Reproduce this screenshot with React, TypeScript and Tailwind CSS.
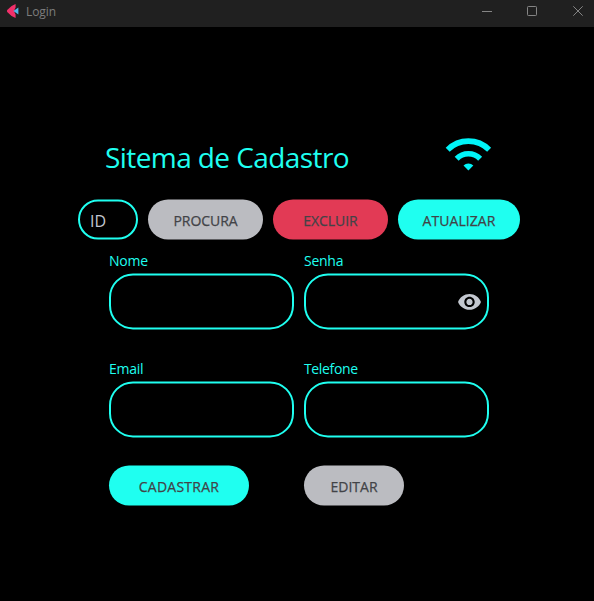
import React from "react";
import { MdVisibility } from "react-icons/md";

function TitleBar() {
  return (
    <header className="flex h-[27px] shrink-0 items-start bg-[#202020] pl-[7px] text-[#7d7d7d]">
      <svg className="mt-1 h-[14px] w-3 shrink-0" viewBox="0 0 12 14">
        <path d="M8.6 0 V3.4 Q6.2 7 8.6 10.6 V14 Q4.5 12.8 0.2 8 Q-0.2 7 0.2 6 Q4.5 1.2 8.6 0Z" fill="#f1306a" />
        <path d="M6.4 7 L11.4 3.4 V10.6Z" fill="#52b6e8" />
      </svg>
      <span className="ml-[7px] mt-1 text-[12px] leading-4 tracking-[-0.1px]">Login</span>
      <svg className="ml-auto mt-1 h-4 w-[120px] shrink-0" viewBox="0 0 120 16" fill="none" stroke="#858585">
        <path d="M8 7.5h10" />
        <rect x="53.5" y="2.5" width="9" height="9" rx="0.8" />
        <path d="M99.3 2.3l9.4 9.4M108.7 2.3l-9.4 9.4" />
      </svg>
    </header>
  );
}

function WifiIcon() {
  return (
    <svg className="h-9 w-12 shrink-0" viewBox="0 0 48 36" fill="none" stroke="#00f4f8" strokeWidth="5.6">
      <g transform="translate(0.4 0)">
        <path d="M3.28 13.68a29.3 29.3 0 0 1 41.44 0" />
        <path d="M12.26 22.66a16.6 16.6 0 0 1 23.48 0" />
        <path d="M24 34.4l-4.9-4.9a6.93 6.93 0 0 1 9.8 0z" fill="#00f4f8" stroke="none" />
      </g>
    </svg>
  );
}

function Pill({ className, textClassName, children }: { className: string; textClassName: string; children: React.ReactNode }) {
  return (
    <button className={`flex h-10 -translate-y-[0.5px] items-center justify-center rounded-full pt-px text-[14px] leading-5 font-medium text-[#424347] ${className}`}>
      <span className={`[-webkit-text-stroke:0.25px_#424347] ${textClassName}`}>{children}</span>
    </button>
  );
}

function Field({ label, labelClassName, children }: { label: string; labelClassName: string; children?: React.ReactNode }) {
  return (
    <label className="flex w-[185px] flex-col">
      <span className={`h-5 text-[14px] leading-5 ${labelClassName}`}>{label}</span>
      <span className="mt-[3px] flex h-14 -translate-y-[0.6px] items-center justify-end rounded-[24px] border-2 border-[#1ffff0] pr-[5px]">
        {children}
      </span>
    </label>
  );
}

export default function App() {
  return (
    <div className="flex h-[601px] w-[594px] flex-col overflow-hidden bg-black font-['Open_Sans','Noto_Sans',sans-serif] text-[#1ffff0]">
      <TitleBar />
      <main className="flex flex-col pt-[109px]">
        <div className="flex h-16 items-start pl-[105px]">
          <h1 className="mt-px w-[339px] text-[28px] leading-10 whitespace-nowrap tracking-[-0.58px]">Sitema de Cadastro</h1>
          <WifiIcon />
        </div>
        <div className="flex gap-[10px] pl-[78px]">
          <div className="flex h-10 w-[60px] -translate-y-[0.5px] items-center rounded-full border-2 border-[#1ffff0] pl-[10px] pt-px text-[16px] text-[#c3c7cf]">ID</div>
          <Pill className="w-[115px] bg-[#bbbcc1]" textClassName="tracking-[-0.05px]">PROCURA</Pill>
          <Pill className="w-[115px] bg-[#e23a55]" textClassName="tracking-[-0.05px]">EXCLUIR</Pill>
          <Pill className="w-[122px] bg-[#1ffff0]" textClassName="tracking-[0.05px]">ATUALIZAR</Pill>
        </div>
        <div className="mt-[11px] flex gap-[10px] pl-[109px]">
          <Field label="Nome" labelClassName="tracking-[-0.2px]" />
          <Field label="Senha" labelClassName="tracking-[-0.25px]">
            <MdVisibility className="size-[25px] text-[#c3c7cf]" />
          </Field>
        </div>
        <div className="mt-[29px] flex gap-[10px] pl-[109px]">
          <Field label="Email" labelClassName="tracking-[-0.25px]" />
          <Field label="Telefone" labelClassName="tracking-[-0.35px]" />
        </div>
        <div className="mt-[28px] flex gap-[55px] pl-[109px]">
          <Pill className="w-[140px] bg-[#1ffff0]" textClassName="tracking-[0.25px]">CADASTRAR</Pill>
          <Pill className="w-[100px] bg-[#bbbcc1]" textClassName="">EDITAR</Pill>
        </div>
      </main>
    </div>
  );
}
